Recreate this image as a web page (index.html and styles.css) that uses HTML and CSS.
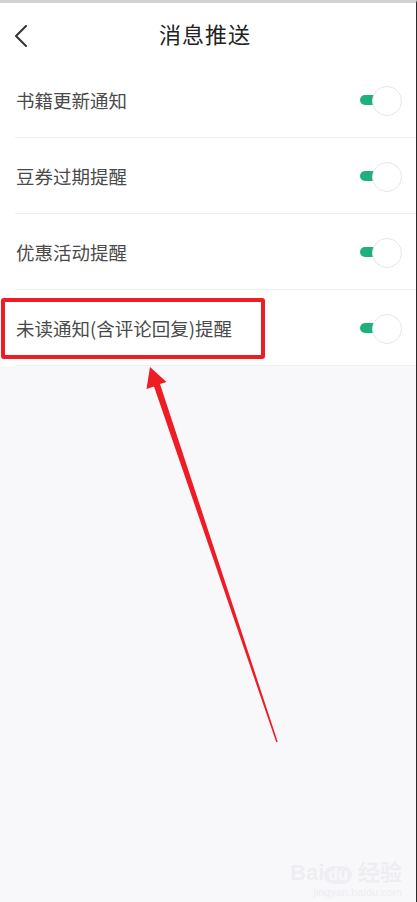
FILE: index.html
```
<!DOCTYPE html>
<html><head>
	<meta charset="utf-8">
	<title>消息推送</title>
	<link rel="stylesheet" href="styles.css">
</head><body>
	<div id="page">
		<div id="header">
			<svg class="back" width="14" height="24" viewBox="0 0 14 24">
				<path d="M12 2 L2 12 L12 22" fill="none" stroke="#333" stroke-width="2" stroke-linecap="round" stroke-linejoin="round"/>
			</svg>
			<span class="title">消息推送</span>
		</div>
		<ul id="list">
			<li class="row"><span>书籍更新通知</span><i class="switch"></i></li>
			<li class="row"><span>豆券过期提醒</span><i class="switch"></i></li>
			<li class="row"><span>优惠活动提醒</span><i class="switch"></i></li>
			<li class="row"><span>未读通知(含评论回复)提醒</span><i class="switch"></i></li>
		</ul>

		<!-- 标注 -->
		<div class="mark-box"></div>
		<svg class="mark-arrow" width="417" height="902" viewBox="0 0 417 902">
			<polygon fill="#ee1c25" points="150,367 146.5,389 154,386.5 276.3,742.3 277.7,741.7 160,384 166.5,382"/>
		</svg>
		<div class="watermark">
			<div class="wm-logo">Bai<b>du</b> 经验</div>
			<div class="wm-url">jingyan.baidu.com</div>
		</div>
	</div>
</body>
</html>
```

FILE: styles.css
```
* {
	box-sizing: border-box;
}
body {
	margin: 0;
	background-color: #fff;
	font-family: "Noto Sans CJK SC", "Noto Sans", sans-serif;
}
#page {
	position: relative;
	width: 417px;
	height: 902px;
	border-top: 3px solid #d2d2d2;
	border-right: 1px solid #2a2a2a;
	background-color: #f8f8fa;
	overflow: hidden;
}
#header {
	height: 59px;
	display: flex;
	align-items: center;
	justify-content: center;
	background-color: #fff;
	position: relative;
}
#header .back {
	position: absolute;
	left: 14px;
	top: 21px;
}
#header .title {
	font-size: 22px;
	color: #222;
	letter-spacing: 1px;
	margin-left: -6px;
}
#list {
	margin: 0;
	padding: 0 0 0 15px;
	list-style: none;
	background-color: #fff;
}
.row {
	height: 76px;
	display: flex;
	align-items: center;
	justify-content: space-between;
	padding: 0 14px 0 1px;
	border-bottom: 1px solid #efeff1;
	font-size: 18.5px;
	color: #4a4a4a;
}
.switch {
	position: relative;
	width: 42px;
	height: 28px;
}
.switch::before {
	content: "";
	position: absolute;
	left: 0;
	top: 9px;
	width: 24px;
	height: 10px;
	border-radius: 5px;
	background-color: #20b07c;
}
.switch::after {
	content: "";
	position: absolute;
	right: 0;
	top: 0;
	width: 28px;
	height: 28px;
	border-radius: 50%;
	background-color: #fff;
	border: 1.5px solid #e6e6ec;
}
.mark-box {
	position: absolute;
	left: 1px;
	top: 295px;
	width: 264px;
	height: 61px;
	border: 4px solid #ee1c25;
	border-radius: 3px;
}
.mark-arrow {
	position: absolute;
	left: 0;
	top: -3px;
}
.watermark {
	position: absolute;
	right: 14px;
	bottom: 4px;
	color: #eeeef2;
	text-align: right;
	font-family: "Liberation Sans", "Noto Sans CJK SC", sans-serif;
}
.wm-logo {
	font-size: 22px;
	font-weight: bold;
}
.wm-logo b {
	display: inline-block;
	background-color: #efeff3;
	color: #f8f8fa;
	border-radius: 10px;
	padding: 0 4px;
	font-size: 16px;
}
.wm-url {
	font-size: 11px;
}
```
